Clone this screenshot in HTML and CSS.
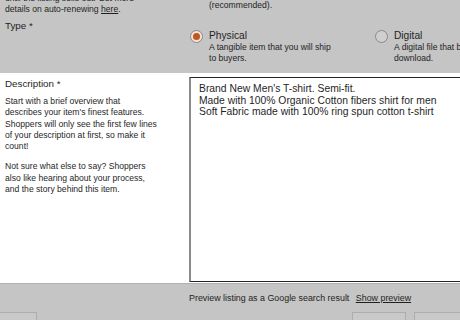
FILE: index.html
```html
<!DOCTYPE html>
<html lang="en">
<head>
    <meta charset="UTF-8">
    <meta name="viewport" content="width=device-width, initial-scale=1.0">
    <title>Listing details</title>
    <link rel="stylesheet" href="styles.css">
</head>
<body>
    <div class="page">
        <section class="band top">
            <div class="field renew">
                <div class="field-label">
                    <p class="help">until the listing sells out. Get more<br>details on auto-renewing <a href="#">here</a>.</p>
                </div>
                <div class="field-input">
                    <p class="note">(recommended).</p>
                </div>
            </div>
            <div class="field type">
                <div class="field-label">
                    <h3>Type *</h3>
                </div>
                <div class="options">
                    <label class="option">
                        <span class="radio checked"></span>
                        <span class="option-text">
                            <span class="option-title">Physical</span>
                            <span class="note">A tangible item that you will ship<br>to buyers.</span>
                        </span>
                    </label>
                    <label class="option">
                        <span class="radio"></span>
                        <span class="option-text">
                            <span class="option-title">Digital</span>
                            <span class="note">A digital file that buyers will<br>download.</span>
                        </span>
                    </label>
                </div>
            </div>
        </section>

        <section class="band desc">
            <div class="field-label">
                <h3>Description *</h3>
                <p class="help">Start with a brief overview that<br>describes your item's finest features.<br>Shoppers will only see the first few lines<br>of your description at first, so make it<br>count!</p>
                <p class="help">Not sure what else to say? Shoppers<br>also like hearing about your process,<br>and the story behind this item.</p>
            </div>
            <div class="textbox">Brand New Men's T-shirt. Semi-fit.<br>Made with 100% Organic Cotton fibers shirt for men<br>Soft Fabric made with 100% ring spun cotton t-shirt</div>
        </section>

        <footer class="band bottom">
            <p class="preview">Preview listing as a Google search result <a href="#">Show preview</a></p>
            <div class="actions">
                <span class="btn btn-left"></span>
                <span class="spacer"></span>
                <span class="btn btn-mid"></span>
                <span class="btn btn-right"></span>
            </div>
        </footer>
    </div>
</body>
</html>
```

FILE: styles.css
```css
body {
    margin: 0;
    font-family: "Liberation Sans", Arial, sans-serif;
    color: #1f1f1f;
    background-color: #c5c5c5;
}
.page {
    width: 460px;
    height: 320px;
    overflow: hidden;
}
.band {
    background-color: #c5c5c5;
}
p, h3 {
    margin: 0;
}
a {
    color: #1f1f1f;
}
.top {
    height: 80px;
    margin-top: -7px;
    box-sizing: border-box;
}
.field {
    display: grid;
    grid-template-columns: 190px 1fr;
}
.field-label {
    padding-left: 5px;
}
.help {
    font-size: 8.6px;
    line-height: 11.3px;
}
.note {
    display: block;
    font-size: 8.6px;
    line-height: 11.5px;
}
.renew .field-input {
    padding-left: 19px;
    padding-top: 7px;
}
h3 {
    font-size: 9.8px;
    font-weight: normal;
    line-height: 12px;
}
.type {
    margin-top: 4px;
}
.options {
    display: grid;
    grid-template-columns: 185px 1fr;
    padding-top: 10px;
}
.option {
    display: flex;
    gap: 6px;
}
.radio {
    width: 11px;
    height: 11px;
    border: 1px solid #8a8a8a;
    border-radius: 50%;
    background-color: #cfcfcf;
    flex-shrink: 0;
    position: relative;
}
.radio.checked {
    background-color: #f1e1d6;
}
.radio.checked::after {
    content: "";
    position: absolute;
    left: 2px;
    top: 2px;
    width: 7px;
    height: 7px;
    border-radius: 50%;
    background-color: #c2571d;
}
.option-text {
    white-space: nowrap;
}
.option-title {
    display: block;
    font-size: 10.2px;
    line-height: 12px;
}
.desc {
    background-color: #fff;
    height: 210px;
    display: grid;
    grid-template-columns: 189px 1fr;
    padding-top: 4px;
    box-sizing: border-box;
}
.desc h3 {
    margin-top: 1px;
    margin-bottom: 6px;
}
.desc .help + .help {
    margin-top: 9px;
}
.textbox {
    height: 198px;
    border-top: 1px solid #222;
    border-bottom: 1px solid #222;
    border-left: 2px solid #8a8a8a;
    padding: 5px 0 0 8px;
    font-size: 10.35px;
    line-height: 11.5px;
    white-space: nowrap;
    overflow: hidden;
}
.bottom {
    height: 37px;
    border-top: 1px solid #b0b0b0;
}
.preview {
    font-size: 8.9px;
    padding: 9px 0 0 189px;
    line-height: 10px;
}
.preview a {
    margin-left: 4px;
}
.actions {
    display: flex;
    gap: 8px;
    margin-top: 9px;
}
.btn {
    height: 20px;
    border: 1px solid #adadad;
    background-color: #c9c9c9;
}
.btn-left {
    width: 36px;
    margin-left: -1px;
}
.spacer {
    flex: 1;
}
.btn-mid {
    width: 52px;
}
.btn-right {
    width: 50px;
    margin-right: -6px;
}
```
